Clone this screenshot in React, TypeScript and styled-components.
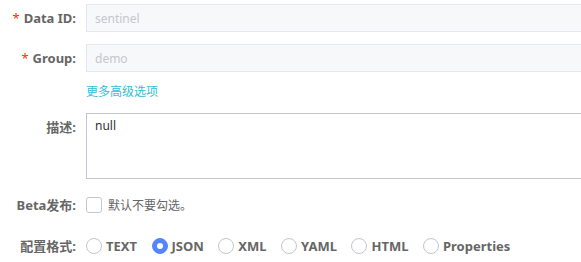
import React from "react";
import styled, { createGlobalStyle } from "styled-components";

const Global = createGlobalStyle`
  html, body { margin: 0; padding: 0; background: #fff; }
  body { font-family: "Noto Sans", "Noto Sans CJK SC", sans-serif; font-size: 12px; color: #333; }
`;

const Form = styled.div`
  width: 600px;
  padding-top: 4px;
  display: flex;
  flex-direction: column;
`;

const Row = styled.div<{ $h: number; $mb: number; $align?: string }>`
  display: flex;
  align-items: ${(p) => p.$align || "center"};
  min-height: ${(p) => p.$h}px;
  margin-bottom: ${(p) => p.$mb}px;
`;

const Label = styled.div<{ $top?: number }>`
  width: 76px;
  flex: none;
  text-align: right;
  padding-right: 10px;
  font-weight: 700;
  color: #666;
  font-size: 13px;
  line-height: 16px;
  padding-top: ${(p) => p.$top || 0}px;
  white-space: nowrap;
`;

const Star = styled.span`
  color: #ff3000;
  margin-right: 4px;
  font-weight: 400;
`;

const Input = styled.div`
  flex: 1;
  height: 28px;
  box-sizing: border-box;
  border: 1px solid #e6e7eb;
  border-right: none;
  background: #f7f8fa;
  color: #c4c6cf;
  padding: 0 8px;
  display: flex;
  align-items: center;
  font-size: 12px;
`;

const Link = styled.a`
  color: #35bcd9;
  font-size: 12px;
  line-height: 16px;
  text-decoration: none;
`;

const TextArea = styled.div`
  flex: 1;
  height: 66px;
  box-sizing: border-box;
  border: 1px solid #c4c6cf;
  border-right: none;
  padding: 4px 8px;
  color: #333;
  font-size: 12px;
  line-height: 16px;
`;

const Checkbox = styled.span`
  width: 14px;
  height: 14px;
  border: 1px solid #c4c6cf;
  border-radius: 3px;
  display: inline-block;
  margin-right: 6px;
`;

const Hint = styled.span`
  color: #666;
  font-size: 12px;
`;

const RadioGroup = styled.div`
  display: flex;
  align-items: center;
`;

const RadioItem = styled.label`
  display: flex;
  align-items: center;
  margin-right: 14.5px;
  font-weight: 700;
  color: #666;
  font-size: 13px;
`;

const Circle = styled.span<{ $on?: boolean }>`
  width: 16px;
  height: 16px;
  box-sizing: border-box;
  border-radius: 50%;
  border: 1px solid ${(p) => (p.$on ? "#5584ff" : "#c4c6cf")};
  background: ${(p) => (p.$on ? "#5584ff" : "#fff")};
  display: inline-flex;
  align-items: center;
  justify-content: center;
  margin-right: 4px;
  &::after {
    content: "";
    display: ${(p) => (p.$on ? "block" : "none")};
    width: 6px;
    height: 6px;
    border-radius: 50%;
    background: #fff;
  }
`;

const formats = ["TEXT", "JSON", "XML", "YAML", "HTML", "Properties"];

export default function App() {
  return (
    <>
      <Global />
      <Form>
        <Row $h={28} $mb={12}>
          <Label><Star>*</Star>Data ID:</Label>
          <Input>sentinel</Input>
        </Row>
        <Row $h={28} $mb={12}>
          <Label><Star>*</Star>Group:</Label>
          <Input>demo</Input>
        </Row>
        <Row $h={16} $mb={13}>
          <Label />
          <Link href="#">更多高级选项</Link>
        </Row>
        <Row $h={66} $mb={17} $align="flex-start">
          <Label $top={6}>描述:</Label>
          <TextArea>null</TextArea>
        </Row>
        <Row $h={16} $mb={23}>
          <Label>Beta发布:</Label>
          <Checkbox />
          <Hint>默认不要勾选。</Hint>
        </Row>
        <Row $h={16} $mb={0}>
          <Label>配置格式:</Label>
          <RadioGroup>
            {formats.map((f) => (
              <RadioItem key={f}>
                <Circle $on={f === "JSON"} />
                {f}
              </RadioItem>
            ))}
          </RadioGroup>
        </Row>
      </Form>
    </>
  );
}
